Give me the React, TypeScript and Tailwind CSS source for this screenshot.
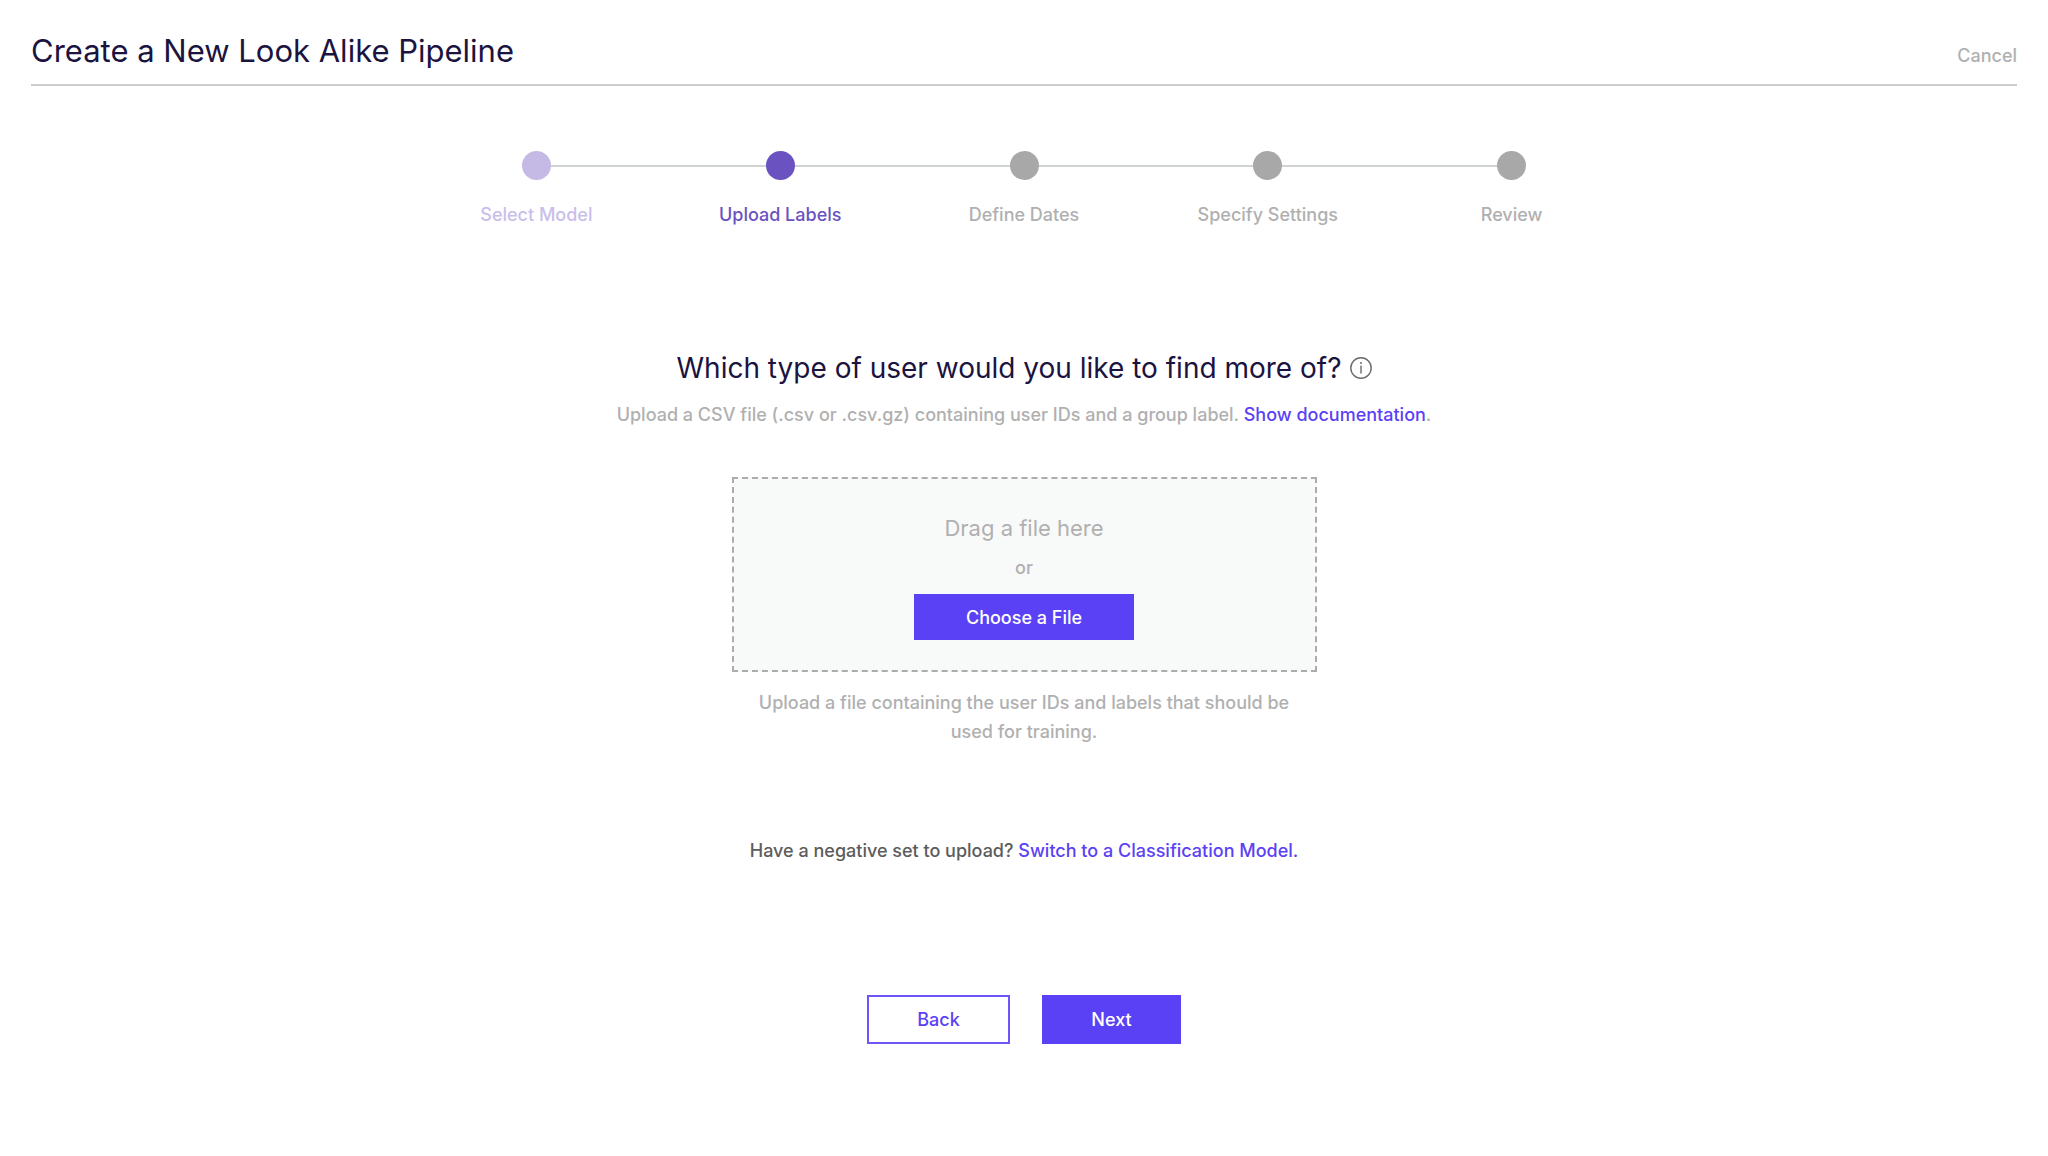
const steps = [
  { label: "Select Model", dot: "bg-[#c5b9e5]", text: "text-[#c9beea]" },
  { label: "Upload Labels", dot: "bg-[#6b52c1]", text: "text-[#6b52c1]" },
  { label: "Define Dates", dot: "bg-[#a8a8a8]", text: "text-[#b0b0b0]" },
  { label: "Specify Settings", dot: "bg-[#a8a8a8]", text: "text-[#b0b0b0]" },
  { label: "Review", dot: "bg-[#a8a8a8]", text: "text-[#b0b0b0]" },
];

const Stepper = () => {
  return (
    <ol className="mx-auto mt-[65px] flex w-full max-w-[1219px]">
      {steps.map((step, i) => (
        <li key={step.label} className="flex flex-1 flex-col items-center">
          <div className="flex w-full items-center">
            <div className={i === 0 ? "h-0.5 flex-1" : "h-0.5 flex-1 bg-[#cfd3d3]"} />
            <div className={`size-[29px] rounded-full ${step.dot}`} />
            <div className={i === steps.length - 1 ? "h-0.5 flex-1" : "h-0.5 flex-1 bg-[#cfd3d3]"} />
          </div>
          <span className={`mt-5 leading-[29px] ${step.text}`}>{step.label}</span>
        </li>
      ))}
    </ol>
  );
};

const InfoIcon = () => {
  return (
    <svg className="size-[22px]" viewBox="0 0 22 22" fill="none" stroke="#6b6b6b">
      <circle cx="11" cy="11" r="10.2" strokeWidth="1.4" />
      <path d="M11 8.5v8" strokeWidth="1.4" />
      <circle cx="11" cy="6" r="1" fill="#6b6b6b" stroke="none" />
    </svg>
  );
};

const App = () => {
  return (
    <div className="min-h-screen bg-white px-[31px] font-['Inter',sans-serif] text-[18px] font-medium text-[#b0b0b0]">
      <header className="flex items-end justify-between border-b-2 border-[#cdcdcd] pt-[29px] pb-[11px]">
        <h1 className="text-[31px] leading-[44px] font-normal text-[#1b1340]">
          Create a New Look Alike Pipeline
        </h1>
        <button type="button" className="leading-[34px]">
          Cancel
        </button>
      </header>

      <Stepper />

      <main className="mt-[119px] flex flex-col items-center text-center">
        <div className="flex items-center gap-2">
          <h2 className="text-[28px] leading-[40px] font-normal text-[#1b1340]">
            Which type of user would you like to find more of?
          </h2>
          <button type="button" aria-label="More information">
            <InfoIcon />
          </button>
        </div>
        <p className="mt-3 leading-[29px]">
          Upload a CSV file (.csv or .csv.gz) containing user IDs and a group label.{" "}
          <a href="#docs" className="text-[#5b41f5]">
            Show documentation
          </a>
          .
        </p>

        <div className="mt-12 flex h-[195px] w-full max-w-[585px] flex-col items-center border-2 border-dashed border-[#acacac] bg-[#f8faf9] pt-8">
          <p className="text-[22px] leading-[34px] font-normal">Drag a file here</p>
          <p className="mt-2 leading-[29px]">or</p>
          <button type="button" className="mt-3 h-[46px] w-[220px] bg-[#5b41f5] text-white">
            Choose a File
          </button>
        </div>
        <p className="mt-4 max-w-[560px] leading-[29px]">
          Upload a file containing the user IDs and labels that should be used for training.
        </p>

        <p className="mt-[90px] leading-[29px] text-[#5c5c5c]">
          Have a negative set to upload?{" "}
          <a href="#classification" className="text-[#5b41f5]">
            Switch to a Classification Model.
          </a>
        </p>

        <div className="mt-[130px] flex gap-8">
          <button type="button" className="h-[49px] w-[143px] border-2 border-[#6d56f6] text-[#5b41f5]">
            Back
          </button>
          <button type="button" className="h-[49px] w-[139px] bg-[#5b41f5] text-white">
            Next
          </button>
        </div>
      </main>
    </div>
  );
};

export default App;
